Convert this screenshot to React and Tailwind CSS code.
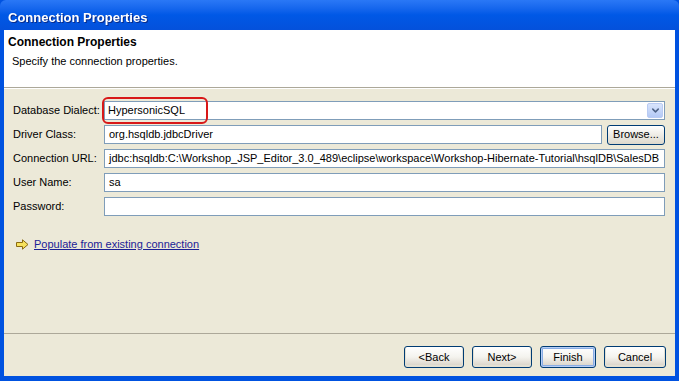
import { ChevronDown } from 'lucide-react';

const fields = [
  { label: 'Driver Class:', value: 'org.hsqldb.jdbcDriver', browse: true },
  {
    label: 'Connection URL:',
    value: 'jdbc:hsqldb:C:\\Workshop_JSP_Editor_3.0_489\\eclipse\\workspace\\Workshop-Hibernate-Tutorial\\hsqlDB\\SalesDB',
  },
  { label: 'User Name:', value: 'sa' },
  { label: 'Password:', value: '' },
];

function XpButton({ children, width, isDefault }) {
  return (
    <button
      type="button"
      className={`h-[22px] ${width} rounded-[3px] border border-[#003C74] bg-gradient-to-b from-[#FFFFFF] via-[#F4F3EE] to-[#D6D0C5] text-[11px] text-black ${
        isDefault ? 'shadow-[inset_0_0_0_1px_#B7CEF6,inset_0_0_0_2px_#89ADE4]' : 'shadow-[inset_0_-1px_0_1px_#E3E0D3]'
      }`}
    >
      {children}
    </button>
  );
}

function ArrowIcon() {
  return (
    <svg width="13" height="11" viewBox="0 0 13 11">
      <path
        d="M0.5 3.5 H6.5 V0.8 L12 5.5 L6.5 10.2 V7.5 H0.5 Z"
        fill="#F7E25C"
        stroke="#8A6A10"
        strokeWidth="1"
        strokeLinejoin="round"
      />
    </svg>
  );
}

export default function App() {
  return (
    <div className="w-[679px] h-[381px] flex flex-col bg-[#0052E0] font-['Liberation_Sans',Arial,sans-serif] text-[11px] text-black overflow-hidden">
      {/* title bar */}
      <div className="h-[30px] shrink-0 flex items-center pt-[6px] px-[8px] rounded-t-[6px] bg-gradient-to-b from-[#2A78F6] via-[#0058E6] to-[#0451DB]">
        <span className="text-[13px] font-bold text-white drop-shadow-[1px_1px_0_#0A2C8A]">
          Connection Properties
        </span>
      </div>

      <div className="flex-1 mx-[4px] mb-[5px] flex flex-col bg-[#ECE9D8]">
        {/* header */}
        <div className="h-[58px] shrink-0 bg-white border-b border-[#ACA899] pt-[5px] pl-[4px]">
          <div className="text-[12px] font-bold leading-[14px]">Connection Properties</div>
          <div className="mt-[5px] pl-[4px] leading-[14px]">Specify the connection properties.</div>
        </div>

        {/* body */}
        <div className="flex-1 border-t border-white pt-[12px] pl-[9px] pr-[10px] flex flex-col">
          <div className="flex flex-col gap-[5px]">
            <div className="flex items-center h-[19px]">
              <span className="w-[91px] shrink-0">Database Dialect:</span>
              <div className="relative flex-1 h-[19px] border border-[#7F9DB9] bg-white flex items-center">
                <span className="pl-[3px]">HypersonicSQL</span>
                <div className="ml-auto mr-[1px] h-[15px] w-[16px] rounded-[2px] bg-gradient-to-b from-[#D8E4FC] to-[#B4C9F5] border border-[#B9CBF3] flex items-center justify-center">
                  <ChevronDown size={11} strokeWidth={3.2} color="#4D6185" />
                </div>
                <div className="absolute left-[-3px] top-[-5px] w-[106px] h-[27px] rounded-[6px] border-2 border-[#D81818]" />
              </div>
            </div>
            {fields.map((f) => (
              <div key={f.label} className="flex items-center h-[19px]">
                <span className="w-[91px] shrink-0">{f.label}</span>
                <div className="flex-1 h-[19px] border border-[#7F9DB9] bg-white flex items-center pl-[4px] whitespace-nowrap overflow-hidden">
                  {f.value}
                </div>
                {f.browse && (
                  <button
                    type="button"
                    className="ml-[5px] w-[58px] h-[20px] rounded-[3px] border border-[#003C74] bg-gradient-to-b from-[#FFFFFF] to-[#DCD8CC] text-[11px]"
                  >
                    Browse...
                  </button>
                )}
              </div>
            ))}
          </div>

          <div className="mt-[20px] flex items-center pl-[3px] gap-[5px]">
            <ArrowIcon />
            <span className="text-[#1B2196] underline underline-offset-1">Populate from existing connection</span>
          </div>
        </div>

        {/* footer */}
        <div className="h-[43px] shrink-0 border-t border-[#ACA899] flex items-start justify-end pt-[12px] pr-[9px] gap-[8px]">
          <XpButton width="w-[60px]">&lt;Back</XpButton>
          <XpButton width="w-[60px]">Next&gt;</XpButton>
          <XpButton width="w-[56px]" isDefault>
            Finish
          </XpButton>
          <XpButton width="w-[62px]">Cancel</XpButton>
        </div>
      </div>
    </div>
  );
}
